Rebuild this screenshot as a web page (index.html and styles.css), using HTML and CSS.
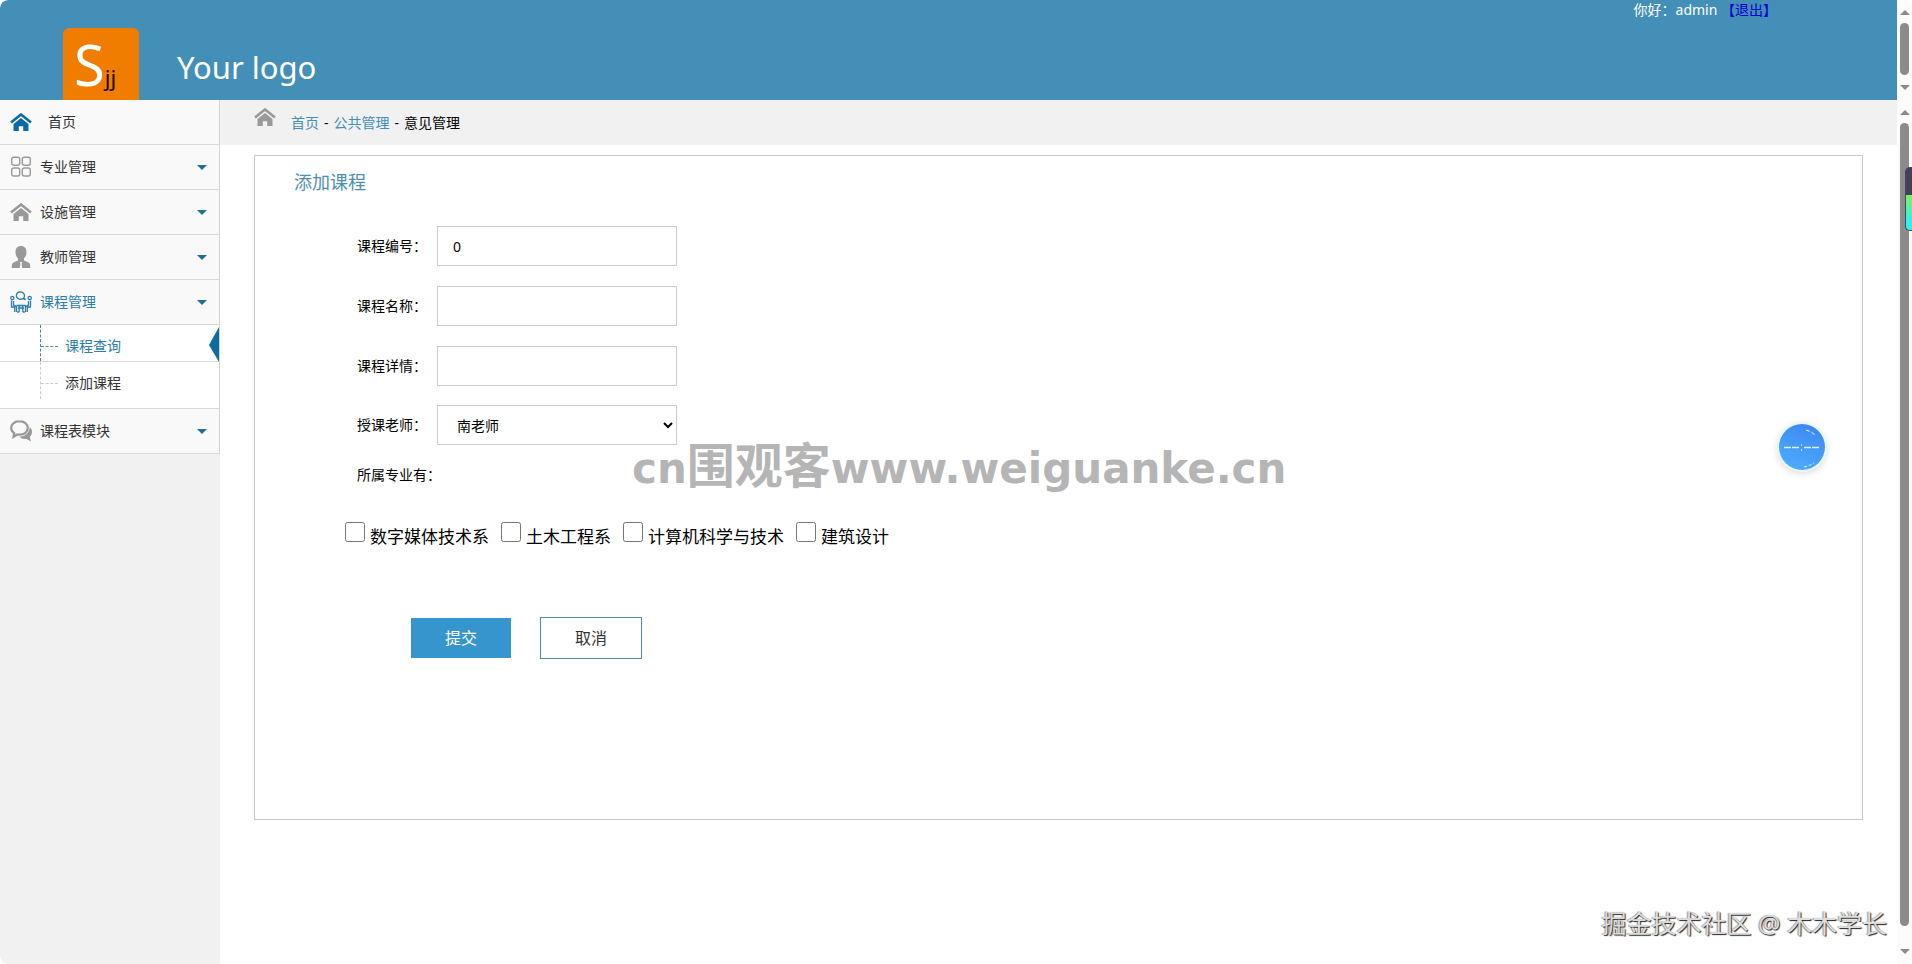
FILE: index.html
```
<!DOCTYPE html>
<html lang="zh-CN">
<head>
  <meta charset="UTF-8">
  <meta name="viewport" content="width=device-width, initial-scale=1.0">
  <title>添加课程</title>
  <link rel="stylesheet" href="styles.css">
</head>
<body>

  <!-- shared icons -->
  <svg class="icon-defs" aria-hidden="true">
    <symbol id="icon-home" viewBox="0 0 22 18">
      <path d="M1 9.5 L11 1.5 L21 9.5" fill="none" stroke="currentColor" stroke-width="2.6"/>
      <path d="M11 5 L18.5 11 V18 H13.2 V13.2 H8.8 V18 H3.5 V11 Z" fill="currentColor"/>
    </symbol>
  </svg>

  <div class="frame top-frame">
    <header class="header">
      <div class="logo"><span class="logo-s">S</span><span class="logo-jj">jj</span></div>
      <div class="logo-text">Your logo</div>
      <div class="user">你好：admin <a href="#">【退出】</a></div>
    </header>
    <div class="scrollbar"><i class="arrow up"></i><i class="thumb"></i><i class="arrow down"></i></div>
  </div>

  <div class="frame main-frame">
    <nav class="sidebar">
      <ul class="menu">
        <li><a class="item home" href="#"><svg class="icon" viewBox="0 0 22 22"><use href="#icon-home" y="2" width="22" height="18"/></svg>首页</a></li>
        <li><a class="item" href="#"><svg class="icon" viewBox="0 0 22 22" fill="none" stroke="currentColor" stroke-width="1.4"><rect x="1.7" y="1.2" width="8" height="8" rx="2"/><rect x="12.3" y="1.2" width="8" height="8" rx="2"/><rect x="1.7" y="12" width="8" height="8" rx="2"/><rect x="12.3" y="12" width="8" height="8" rx="2"/></svg><span>专业管理</span></a></li>
        <li><a class="item" href="#"><svg class="icon" viewBox="0 0 22 22"><use href="#icon-home" y="2" width="22" height="18"/></svg><span>设施管理</span></a></li>
        <li><a class="item" href="#"><svg class="icon" viewBox="0 0 22 22" fill="currentColor"><path d="M11 0C7.500 0 5.500 2.500 5.500 6c0 3 1 5 2.500 6.500v2L3.500 16.500C2 17.300 1.700 19 1.700 22H9.800l.6-4.500-.7-1.500h2.600l-.7 1.500.6 4.500H20.300c0-3-.3-4.700-1.800-5.500L14 14.500v-2C15.500 11 16.500 9 16.500 6 16.500 2.500 14.500 0 11 0z"/></svg><span>教师管理</span></a></li>
        <li>
          <a class="item active" href="#"><svg class="icon" viewBox="0 0 22 22" fill="none" stroke="currentColor" stroke-width="1.3"><path d="M8 7.500C5.500 6 5.800 1 10 .8c4 0 5.500 3.500 3.800 6.200L15.500 8.500l-3-.8c-1.500.8-3 .7-4.500-.2z"/><circle cx="2.300" cy="7" r="1.600"/><circle cx="19.700" cy="7" r="1.600"/><path d="M1.500 9.500v6.500h3.200v5M3.500 10v4l3 1.500v5.500M20.500 9.500v6.500h-3.200v5M18.500 10v4l-3 1.500v5.500"/><path d="M6.500 14.500h9M8 17h6M9.200 15v6M12.800 15v6M9.200 21h-2M12.800 21h2"/></svg><span>课程管理</span></a>
          <ul class="submenu">
            <li class="current"><a href="#">课程查询</a></li>
            <li><a href="#">添加课程</a></li>
          </ul>
        </li>
        <li><a class="item" href="#"><svg class="icon" viewBox="0 0 22 22"><path d="M9.500 1.200C4.800 1.200 1.200 4 1.200 8c0 2.200 1.200 4 3 5.200L3.500 16.800l4-2.300c.6.100 1.300.2 2 .2 4.700 0 8.300-2.700 8.300-6.700s-3.600-6.800-8.300-6.800z" fill="none" stroke="currentColor" stroke-width="2.200"/><path d="M19.700 7c1.500 1.300 2.300 3 2.300 5 0 2-.8 3.600-2.200 4.900l1.200 4.600-4.500-2.500c-3 .4-5.500-.4-7.200-2.400 5.500 0 10.200-3.500 10.400-9.600z" fill="currentColor"/></svg><span>课程表模块</span></a></li>
      </ul>
    </nav>

    <main class="content">
      <div class="breadcrumb">
        <svg class="crumb-icon" viewBox="0 0 22 18"><use href="#icon-home"/></svg>
        <div class="crumbs"><a href="#">首页</a><span>-</span><a href="#">公共管理</a><span>-</span><span>意见管理</span></div>
      </div>

      <form class="panel">
        <h1>添加课程</h1>
        <div class="row"><label for="cid">课程编号：</label><input type="text" id="cid" value="0"></div>
        <div class="row"><label for="cname">课程名称：</label><input type="text" id="cname"></div>
        <div class="row"><label for="cinfo">课程详情：</label><input type="text" id="cinfo"></div>
        <div class="row"><label for="teacher">授课老师：</label><select id="teacher"><option>南老师</option></select></div>
        <div class="major-title">所属专业有：</div>
        <div class="majors">
          <label><input type="checkbox">数字媒体技术系</label>
          <label><input type="checkbox">土木工程系</label>
          <label><input type="checkbox">计算机科学与技术</label>
          <label><input type="checkbox">建筑设计</label>
        </div>
        <div class="buttons">
          <button type="submit" class="submit">提交</button>
          <button type="button" class="cancel">取消</button>
        </div>
      </form>
    </main>
    <div class="scrollbar"><i class="arrow up"></i><i class="thumb"></i><i class="arrow down"></i></div>
  </div>

  <div class="site-mark">cn<span>围观客</span>www.weiguanke.cn</div>
  <div class="float-ball"><svg viewBox="0 0 46 46" fill="none" stroke="#d8f0ff"><path d="M5 23.500H20M25 23.500H41" stroke-width="1.600" stroke-dasharray="7 1"/><path d="M22 21h1M22 26h1" stroke-width="1.500"/><path d="M27 6c4 1 7 3 10 6" stroke-dasharray="4 2"/><path d="M25 43c4-1 7-2 10-4" stroke-dasharray="3 2"/></svg></div>
  <div class="side-meter"></div>
  <div class="author-mark">掘金技术社区 @ 木木学长</div>

</body>
</html>
```
FILE: styles.css
```
* {
  box-sizing: border-box;
}
body {
  margin: 0;
  min-height: 100vh;
  display: flex;
  flex-direction: column;
  font-family: "Noto Sans", "Noto Sans CJK SC", sans-serif;
  font-size: 14px;
  line-height: 20px;
  color: #000;
  background: #fff;
  border-radius: 8px;
  overflow: hidden;
}
a {
  color: #438eb9;
  text-decoration: none;
}
ul {
  list-style: none;
  margin: 0;
  padding: 0;
}
.icon-defs {
  position: absolute;
  width: 0;
  height: 0;
}
.frame {
  display: flex;
}
.main-frame {
  flex: 1;
}

/* header */
.header {
  flex: 1;
  height: 100px;
  display: flex;
  align-items: flex-end;
  background: #438fb8;
  color: #fff;
  border-top-left-radius: 8px;
}
.logo {
  width: 76px;
  height: 72px;
  margin-left: 63px;
  padding-left: 11px;
  background: #f07c00;
  border-radius: 6px 6px 0 0;
  line-height: 72px;
}
.logo-s {
  font-size: 56px;
}
.logo-jj {
  font-size: 22px;
  color: #200a00;
}
.logo-text {
  margin-left: 38px;
  padding-bottom: 13px;
  font-size: 31px;
  line-height: 40px;
}
.user {
  align-self: flex-start;
  margin-left: auto;
  margin-right: 120px;
}
.user a {
  color: #00c;
}

/* scrollbars */
.scrollbar {
  width: 15px;
  display: flex;
  flex-direction: column;
  align-items: center;
  padding: 10px 0;
  background: #fcfcfc;
}
.thumb {
  flex: 1;
  width: 9px;
  margin: 8px 0 10px;
  border-radius: 5px;
  background: #8b8b8b;
}
.main-frame .thumb {
  margin-bottom: 23px;
}
.arrow {
  border: 5px solid transparent;
}
.up {
  border-top: 0;
  border-bottom-color: #8b8b8b;
}
.down {
  border-bottom: 0;
  border-top-color: #8b8b8b;
}

/* sidebar */
.sidebar {
  width: 220px;
  background: #f1f1f1;
  border-bottom-left-radius: 8px;
}
.menu {
  border-right: 1px solid #d5d5d5;
}
.item {
  display: flex;
  align-items: center;
  height: 45px;
  padding: 0 12px 0 10px;
  background: #f9f9f9;
  border-bottom: 1px solid #d8d8d8;
  color: #333;
}
.icon {
  width: 22px;
  height: 22px;
  margin-right: 8px;
  color: #999;
}
.item span {
  flex: 1;
}
.item:not(.home)::after {
  content: "";
  border: 5px solid transparent;
  border-top-color: #1f6f96;
  border-bottom: 0;
}
.home .icon {
  margin-right: 16px;
  color: #0b6ca5;
}
.item.active,
.item.active .icon {
  color: #2b7dab;
}
.submenu {
  padding-bottom: 9px;
  background: #fff;
  border-bottom: 1px solid #d8d8d8;
}
.submenu li {
  position: relative;
  height: 37px;
  padding-left: 65px;
  line-height: 42px;
}
.submenu a {
  color: #333;
}
.submenu .current {
  border-bottom: 1px solid #d8d8d8;
}
.submenu .current a {
  color: #2b7dab;
}
/* tree lines */
.submenu li::before {
  content: "";
  position: absolute;
  left: 40px;
  top: 0;
  height: 100%;
  border-left: 1px dashed #ccc;
}
.submenu li::after {
  content: "";
  position: absolute;
  left: 41px;
  top: 21px;
  width: 17px;
  border-top: 1px dashed #ccc;
}
.submenu .current::before,
.submenu .current::after {
  border-color: #4b8591;
}
.submenu .current a::after {
  content: "";
  position: absolute;
  right: 0;
  top: 2px;
  border: solid transparent;
  border-width: 18px 10px 17px 0;
  border-right-color: #0b6ca5;
}

/* content */
.content {
  flex: 1;
}
.breadcrumb {
  display: flex;
  height: 45px;
  padding-left: 34px;
  gap: 15px;
  background: #f1f1f1;
  line-height: 46px;
}
.crumbs {
  display: flex;
  gap: 5px;
}
.crumb-icon {
  width: 22px;
  height: 18px;
  margin-top: 8px;
  color: #999;
}
.panel {
  min-height: 665px;
  margin: 10px 34px 0;
  padding: 0 39px;
  border: 1px solid #c8c8c8;
}
.panel h1 {
  margin: 0 0 29px;
  padding-top: 11px;
  font-size: 18px;
  font-weight: normal;
  line-height: 30px;
  color: #4d8fb0;
}
.row {
  display: flex;
  align-items: center;
  margin-bottom: 20px;
  padding-left: 63px;
}
/* teacher row sits a little closer */
.row:nth-of-type(3) {
  margin-bottom: 19px;
}
.row label {
  width: 80px;
}
.row input,
.row select {
  width: 240px;
  height: 40px;
  padding: 0 15px;
  border: 1px solid #ccc;
  border-radius: 0;
  background: #fff;
  font: inherit;
  color: #000;
}
.row select {
  padding: 0 0 0 15px;
}
.major-title {
  padding-left: 63px;
}
.majors {
  display: flex;
  gap: 12px;
  margin-top: 37px;
  padding-left: 51px;
  font-size: 17px;
  line-height: 30px;
}
.majors label {
  display: flex;
}
.majors input {
  width: 20px;
  height: 20px;
  margin: 0 5px 0 0;
}
.buttons {
  display: flex;
  align-items: center;
  gap: 29px;
  margin-top: 65px;
  padding-left: 117px;
}
.buttons button {
  width: 100px;
  height: 40px;
  border: 0;
  background: #3695cc;
  color: #fff;
  font: inherit;
  font-size: 16px;
}
.buttons .cancel {
  width: 102px;
  height: 42px;
  border: 1px solid #4f8f9f;
  background: #fff;
  color: #333;
}

/* floating things over the page */
.site-mark {
  position: absolute;
  left: 632px;
  top: 436px;
  font-family: "DejaVu Sans", "Noto Sans CJK SC", sans-serif;
  font-size: 42px;
  font-weight: bold;
  line-height: 60px;
  color: #b5b5b5;
}
.site-mark span {
  font-size: 48px;
}
.float-ball {
  position: absolute;
  right: 87px;
  top: 424px;
  width: 46px;
  height: 46px;
  border-radius: 50%;
  background: linear-gradient(20deg, #4fb0ff, #3c84ee);
  box-shadow: 0 0 0 2px #e8f8ff, 0 2px 6px 2px #ddd;
}
.float-ball svg {
  display: block;
}
.side-meter {
  position: absolute;
  right: 0;
  top: 167px;
  width: 7px;
  height: 64px;
  border: 1px solid #446;
  border-right: 0;
  border-radius: 5px 0 0 5px;
  background: linear-gradient(#44405a 27px, #80f060 27px, #30f0f0 54px);
}
.author-mark {
  position: absolute;
  right: 25px;
  bottom: 22px;
  font-size: 25px;
  line-height: 38px;
  color: #ddd;
  text-shadow: 1px 1px 1px #222, -1px 0 1px #999;
}
```
